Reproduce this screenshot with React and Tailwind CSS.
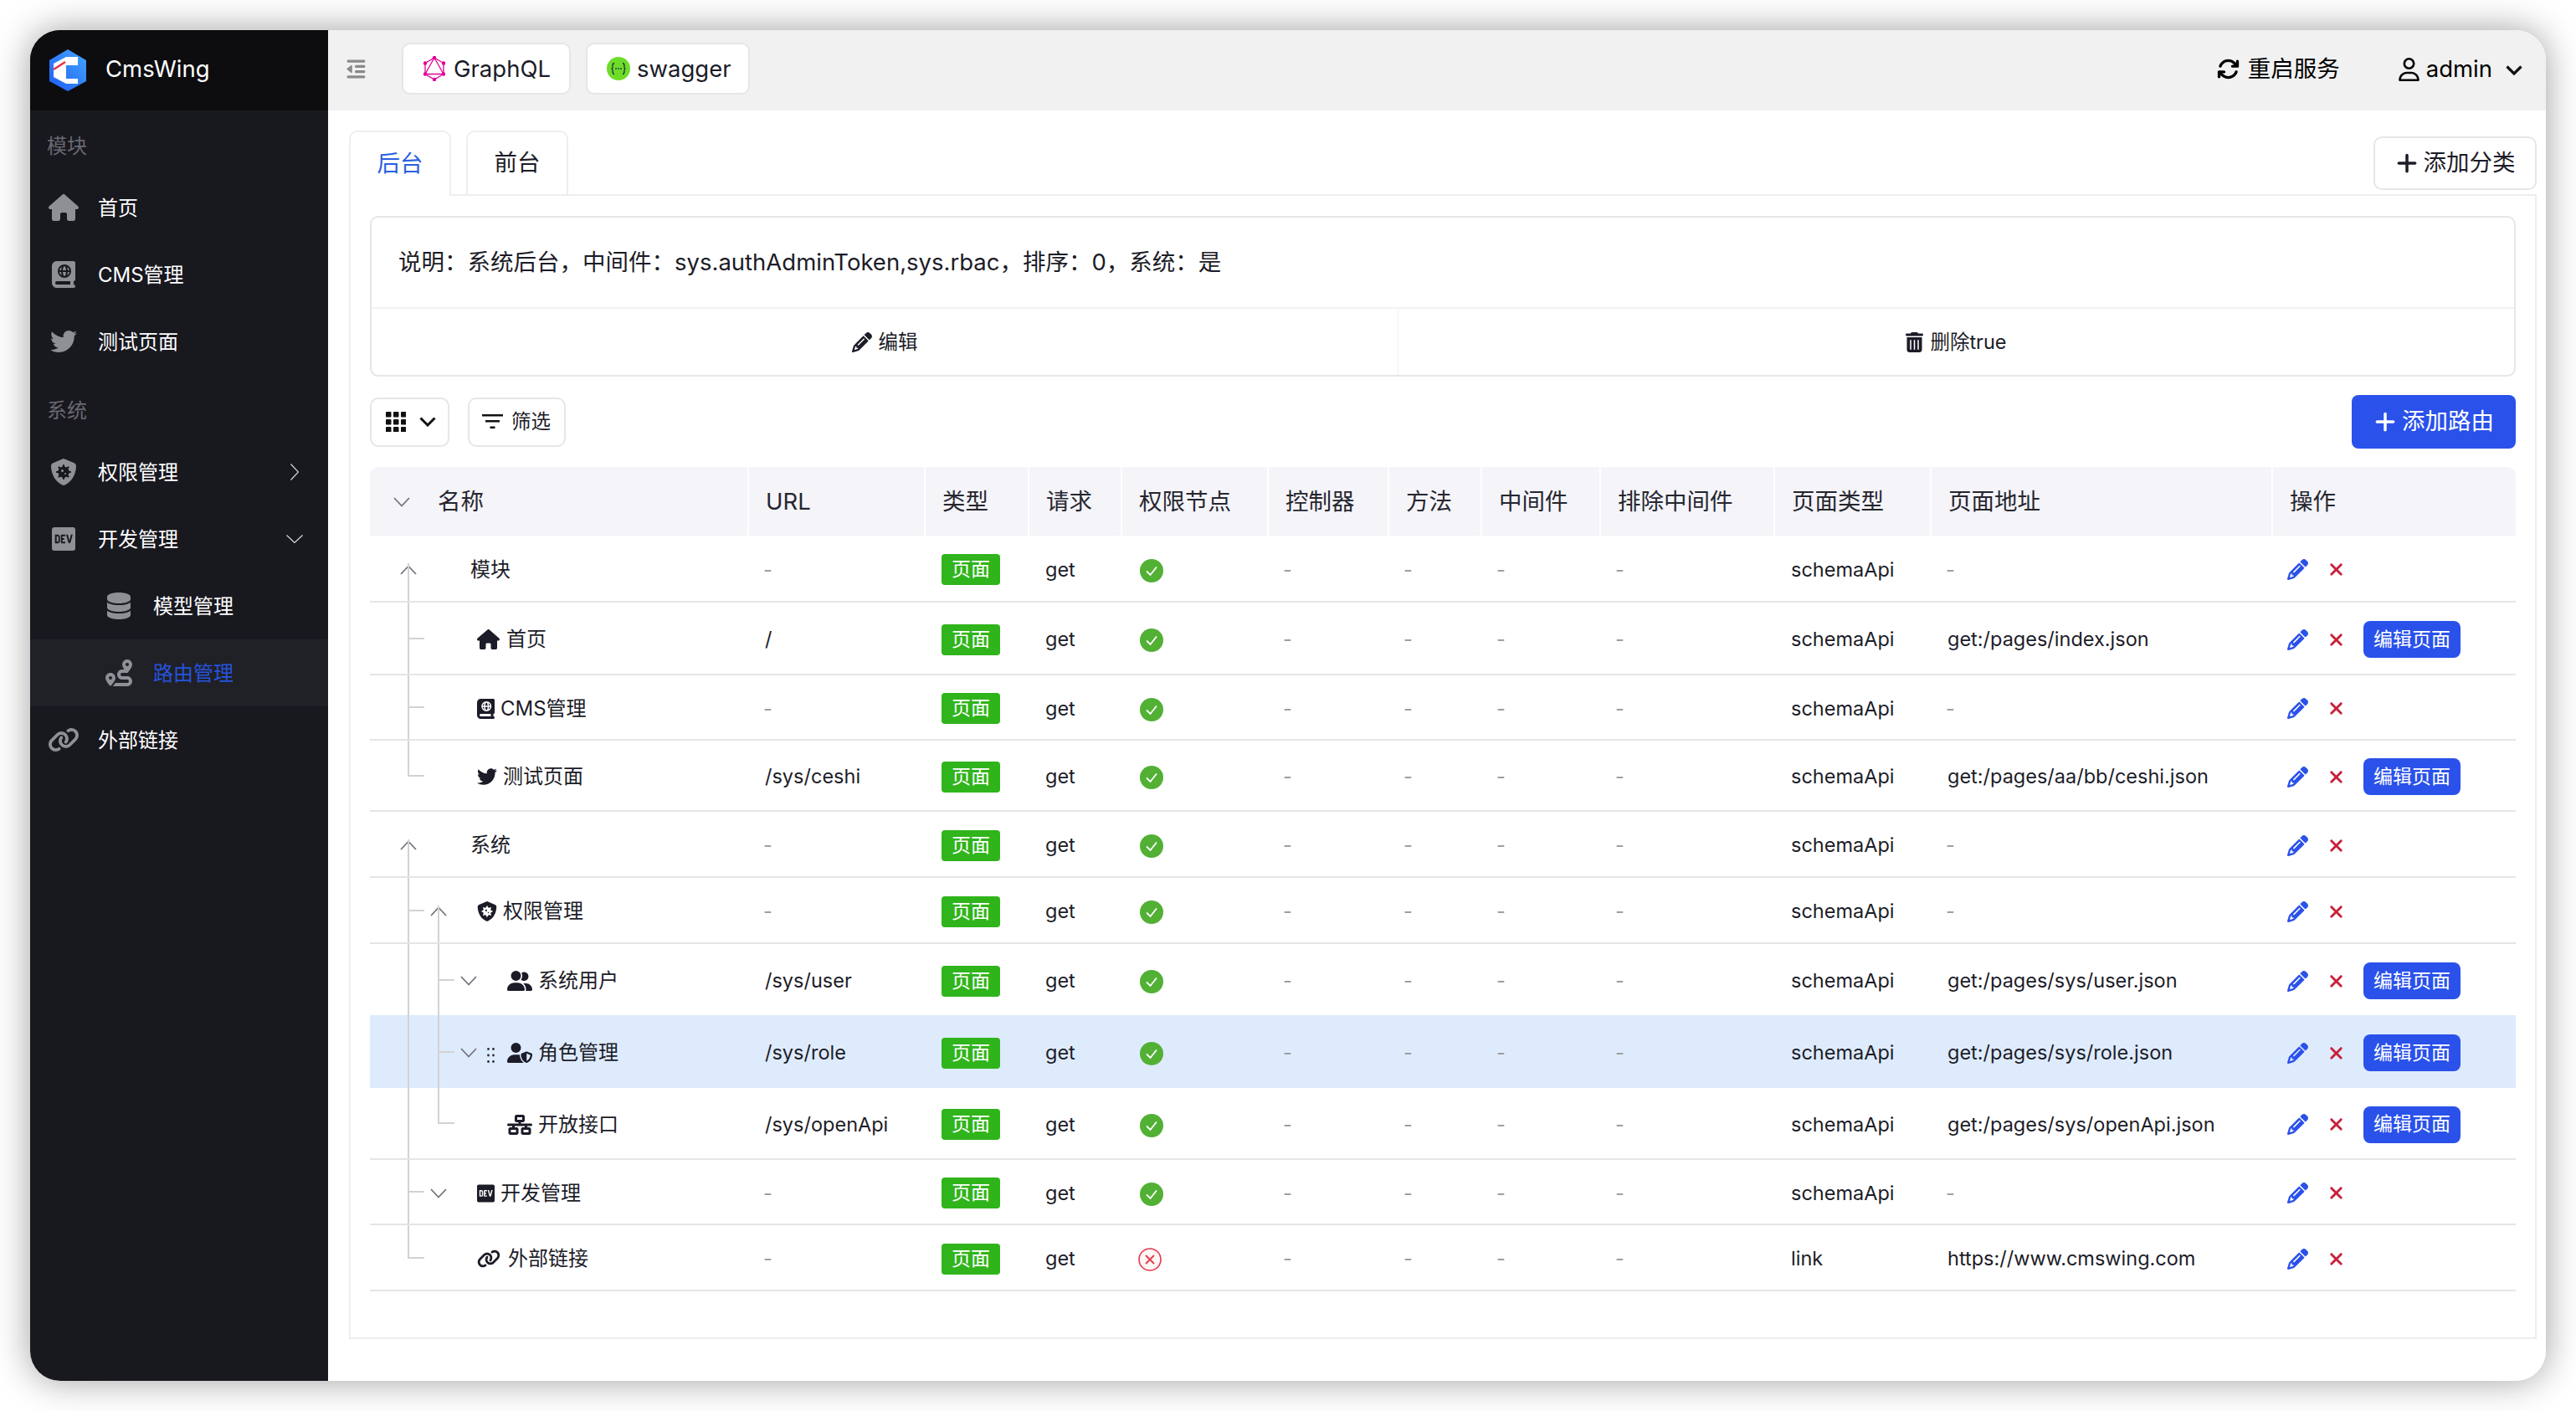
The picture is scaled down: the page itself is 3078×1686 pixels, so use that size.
import React from 'react';
import {
  FaHouse, FaBookAtlas, FaTwitter, FaShieldVirus, FaDev, FaDatabase, FaRoute, FaLink,
  FaUserGroup, FaUserShield, FaNetworkWired, FaPencil, FaXmark, FaTrashCan,
  FaArrowsRotate, FaPlus, FaRegUser, FaOutdent,
} from 'react-icons/fa6';

const INFO = '说明\uFF1A系统后台\uFF0C中间件\uFF1Asys.authAdminToken,sys.rbac\uFF0C排序\uFF1A0\uFF0C系统\uFF1A是';

const Logo = () => (
  <svg viewBox="0 0 44 50" className="w-[44px] h-[50px]">
    <defs>
      <linearGradient id="lg" x1="0" y1="1" x2="1" y2="0">
        <stop offset="0" stopColor="#1d5cf5" />
        <stop offset="1" stopColor="#45a6ff" />
      </linearGradient>
    </defs>
    <polygon points="22,0 44,13 44,38 22,50 0,38 0,13" fill="url(#lg)" />
    <polygon points="5,17 20,9 34,9 34,19 20,19 20,35 34,35 34,41 20,41 5,33" fill="#fff" />
    <line x1="5" y1="24" x2="19" y2="15" stroke="#e8304a" strokeWidth="2.4" />
  </svg>
);

const GraphQLIcon = () => (
  <svg viewBox="0 0 26 30" className="w-[26px] h-[30px]" fill="none" stroke="#e10098" strokeWidth="1.3">
    <polygon points="13,2 24,8.5 24,21.5 13,28 2,21.5 2,8.5" />
    <polygon points="13,2 24,21.5 2,21.5" />
    {[[13, 2], [24, 8.5], [24, 21.5], [13, 28], [2, 21.5], [2, 8.5]].map(([x, y], i) => (
      <circle key={i} cx={x} cy={y} r="2.2" fill="#e10098" stroke="none" />
    ))}
  </svg>
);

const SwaggerIcon = () => (
  <svg viewBox="0 0 28 28" className="w-[28px] h-[28px]">
    <circle cx="14" cy="14" r="14" fill="#6fdc28" />
    <path d="M9 7.500c-2 0-2 1.500-2 3.500v1c0 1-.5 2-1.500 2 1 0 1.500 1 1.500 2v1c0 2 0 3.500 2 3.500" fill="none" stroke="#173647" strokeWidth="1.300" />
    <path d="M19 7.500c2 0 2 1.500 2 3.500v1c0 1 .5 2 1.500 2-1 0-1.500 1-1.500 2v1c0 2 0 3.500-2 3.500" fill="none" stroke="#173647" strokeWidth="1.300" />
    <circle cx="11" cy="14" r="0.9" fill="#173647" />
    <circle cx="14" cy="14" r="0.9" fill="#173647" />
    <circle cx="17" cy="14" r="0.9" fill="#173647" />
  </svg>
);

const GridIcon = () => (
  <svg viewBox="0 0 24 24" className="w-[24px] h-[24px]" fill="#111">
    {[0, 9, 18].flatMap((y) => [0, 9, 18].map((x) => (
      <rect key={`${x}-${y}`} x={x} y={y} width="6.500" height="6.500" rx="1" />
    )))}
  </svg>
);

const Chev = ({ dir }) => (
  <svg viewBox="0 0 20 12" className="w-[20px] h-[12px] shrink-0" fill="none" stroke="#74747c" strokeWidth="1.800">
    <polyline points={dir === 'up' ? '1,11 10,1.500 19,11' : '1,1 10,10.500 19,1'} />
  </svg>
);

const CheckDot = () => (
  <svg viewBox="0 0 28 28" className="w-[28px] h-[28px] relative top-[1px] left-[2px]">
    <circle cx="14" cy="14" r="14" fill="#52b035" />
    <polyline points="8,14.500 12.500,19 20,9.500" fill="none" stroke="#fff" strokeWidth="1.800" />
  </svg>
);

const CrossDot = () => (
  <svg viewBox="0 0 28 28" className="w-[28px] h-[28px] relative top-[1px]">
    <circle cx="14" cy="14" r="13" fill="#fff5f5" stroke="#e5394f" strokeWidth="1.600" />
    <path d="M9 9l10 10M19 9L9 19" stroke="#e5394f" strokeWidth="1.800" />
  </svg>
);

const FilterIcon = () => (
  <svg viewBox="0 0 25 18" className="w-[25px] h-[18px]" fill="#111">
    <rect x="0" y="0" width="25" height="2.500" />
    <rect x="4" y="7" width="17" height="2.500" />
    <rect x="9.500" y="14.500" width="6" height="2.500" />
  </svg>
);

const NavItem = ({ icon, label, sub, active, right }) => (
  <div className={`flex items-center h-[80px] ${sub ? 'pl-[86px]' : 'pl-[20px]'} ${active ? 'bg-[#1f2127]' : ''}`}>
    <span className="w-[40px] flex justify-center text-[#8f8f96]">{icon}</span>
    <span className={`ml-[21px] pt-[1px] text-[24px] ${active ? 'text-[#2653dc]' : 'text-white'}`}>{label}</span>
    {right}
  </div>
);

const GroupLabel = ({ children }) => (
  <div className="h-[76px] pt-[10px] pl-[20px] flex items-center text-[24px] text-[#68686f]">{children}</div>
);

const Sidebar = () => (
  <aside className="w-[356px] shrink-0 bg-[#18181f] flex flex-col">
    <div className="h-[96px] bg-[#0d0d10] flex items-center pl-[23px]">
      <Logo />
      <span className="ml-[23px] pb-[3px] text-[27.500px] text-white">CmsWing</span>
    </div>
    <GroupLabel>模块</GroupLabel>
    <NavItem icon={<FaHouse className="w-[36px] h-[32px]" />} label="首页" />
    <NavItem icon={<FaBookAtlas className="w-[28px] h-[32px]" />} label="CMS管理" />
    <NavItem icon={<FaTwitter className="w-[32px] h-[32px]" />} label="测试页面" />
    <GroupLabel>系统</GroupLabel>
    <NavItem
      icon={<FaShieldVirus className="w-[32px] h-[32px]" />}
      label="权限管理"
      right={
        <svg viewBox="0 0 10 20" className="w-[10px] h-[20px] ml-auto mr-[35px]" fill="none" stroke="#d8d8dc" strokeWidth="1.200">
          <polyline points="0.500,0.500 9.500,10 0.500,19.500" />
        </svg>
      }
    />
    <NavItem
      icon={<FaDev className="w-[28px] h-[32px]" />}
      label="开发管理"
      right={
        <svg viewBox="0 0 20 10" className="w-[20px] h-[10px] ml-auto mr-[30px]" fill="none" stroke="#d8d8dc" strokeWidth="1.200">
          <polyline points="0.500,0.500 10,9.500 19.500,0.500" />
        </svg>
      }
    />
    <NavItem sub icon={<FaDatabase className="w-[28px] h-[32px]" />} label="模型管理" />
    <NavItem sub active icon={<FaRoute className="w-[32px] h-[32px]" />} label="路由管理" />
    <NavItem icon={<FaLink className="w-[38px] h-[32px]" />} label="外部链接" />
  </aside>
);

const TopBtn = ({ icon, label, className }) => (
  <div className={`h-[62px] flex items-center bg-white border-2 border-[#e6e6e6] rounded-[10px] ${className}`}>
    {icon}
    <span className="pt-[1px] text-[27.500px] text-[#1c1c28]">{label}</span>
  </div>
);

const Header = () => (
  <header className="h-[96px] shrink-0 bg-[#f1f1f1] flex items-center pb-[4px] text-black">
    <FaOutdent className="ml-[21px] w-[25px] h-[25px] text-[#8a8a8a]" />
    <TopBtn className="ml-[42px] w-[202px] pl-[24px]" icon={<span className="mr-[10px]"><GraphQLIcon /></span>} label="GraphQL" />
    <TopBtn className="ml-[18px] w-[196px] pl-[23px]" icon={<span className="mr-[8px]"><SwaggerIcon /></span>} label="swagger" />
    <div className="ml-auto pt-[1px] flex items-center">
      <FaArrowsRotate className="w-[27px] h-[27px]" />
      <span className="ml-[10px] text-[27.500px]">重启服务</span>
      <FaRegUser className="ml-[70px] w-[25px] h-[28px]" />
      <span className="ml-[8px] text-[27.500px]">admin</span>
      <svg viewBox="0 0 20 12" className="ml-[16px] mr-[28px] mt-[3px] w-[20px] h-[12px]" fill="none" stroke="#111" strokeWidth="3.200">
        <polyline points="1.500,1.500 10,10 18.500,1.500" />
      </svg>
    </div>
  </header>
);

const cols = [451, 211, 124, 111, 175, 144, 111, 142, 208, 187, 408, 292];
const heads = ['名称', 'URL', '类型', '请求', '权限节点', '控制器', '方法', '中间件', '排除中间件', '页面类型', '页面地址', '操作'];

const rows = [
  { h: 'h-[80px]', label: '模块', level: 0, chev: 'up', v1: 'start' },
  { h: 'h-[87px]', label: '首页', icon: <FaHouse className="w-[27px] h-[24px]" />, gap: 'ml-[8px]', level: 1, v1: 'full', t1: true, url: '/', addr: 'get:/pages/index.json', edit: true },
  { h: 'h-[78px]', label: 'CMS管理', icon: <FaBookAtlas className="w-[21px] h-[24px]" />, gap: 'ml-[7px]', level: 1, v1: 'full', t1: true },
  { h: 'h-[85px]', label: '测试页面', icon: <FaTwitter className="w-[24px] h-[24px]" />, gap: 'ml-[7px]', level: 1, v1: 'end', t1: true, url: '/sys/ceshi', addr: 'get:/pages/aa/bb/ceshi.json', edit: true },
  { h: 'h-[79px]', label: '系统', level: 0, chev: 'up', v1: 'start' },
  { h: 'h-[79px]', label: '权限管理', icon: <FaShieldVirus className="w-[24px] h-[24px]" />, gap: 'ml-[7px]', level: 1, chev: 'up', v1: 'full', t1: true, v2: 'start' },
  { h: 'h-[85px]', label: '系统用户', icon: <FaUserGroup className="w-[30px] h-[24px]" />, gap: 'ml-[7px]', level: 2, chev: 'down', v1: 'full', v2: 'full', t2: true, url: '/sys/user', addr: 'get:/pages/sys/user.json', edit: true, nb: true },
  { h: 'h-[87px]', label: '角色管理', icon: <FaUserShield className="w-[30px] h-[24px]" />, gap: 'ml-[7px]', level: 2, chev: 'down', v1: 'full', v2: 'full', t2: true, url: '/sys/role', addr: 'get:/pages/sys/role.json', edit: true, nb: true, hi: true },
  { h: 'h-[86px]', label: '开放接口', icon: <FaNetworkWired className="w-[30px] h-[24px]" />, gap: 'ml-[7px]', level: 2, v1: 'full', v2: 'end', t2: true, url: '/sys/openApi', addr: 'get:/pages/sys/openApi.json', edit: true },
  { h: 'h-[78px]', label: '开发管理', icon: <FaDev className="w-[21px] h-[24px]" />, gap: 'ml-[7px]', level: 1, chev: 'down', v1: 'full', t1: true },
  { h: 'h-[79px]', label: '外部链接', icon: <FaLink className="w-[28px] h-[24px]" />, gap: 'ml-[9px]', level: 1, v1: 'end', t1: true, type: 'link', addr: 'https://www.cmswing.com', bad: true },
];

const V1 = {
  start: 'top-[33px] bottom-0',
  full: 'top-0 bottom-0',
  end: 'top-0 h-1/2',
};
const LEVEL = ['pl-[36px]', 'pl-[72px]', 'pl-[108px]'];

const Guides = ({ r }) => (
  <>
    {r.v1 && <span className={`absolute left-[45px] w-[2px] bg-[#d2d2d2] ${V1[r.v1]}`} />}
    {r.t1 && <span className="absolute left-[45px] w-[20px] h-[2px] top-[calc(50%-1px)] bg-[#d2d2d2]" />}
    {r.v2 && <span className={`absolute left-[81px] w-[2px] bg-[#d2d2d2] ${V1[r.v2]}`} />}
    {r.t2 && <span className="absolute left-[81px] w-[20px] h-[2px] top-[calc(50%-1px)] bg-[#d2d2d2]" />}
  </>
);

const Dash = () => <span className="relative left-[-2px] text-[#9c9ca2]">-</span>;

const Row = ({ r }) => {
  const line = r.nb ? '' : 'border-b-2 border-[#e5e5e5]';
  const td = `align-middle p-0 pt-[3px] pl-[21px] ${line}`;
  return (
    <tr className={`${r.h} ${r.hi ? 'bg-[#deebfd]' : ''}`}>
      <td className={`relative align-middle p-0 pt-[3px] text-[24px] ${line}`}>
        <Guides r={r} />
        <div className={`flex items-center ${LEVEL[r.level]}`}>
          <span className="w-[20px] shrink-0 flex justify-center">{r.chev && <Chev dir={r.chev} />}</span>
          {r.level === 0 ? (
            <span className="ml-[64px]">{r.label}</span>
          ) : (
            <div className="ml-[36px] flex items-center text-[#1c1c28]">
              {r.icon}
              <span className={r.gap}>{r.label}</span>
            </div>
          )}
        </div>
        {r.hi && (
          <svg viewBox="0 0 9 18" className="absolute left-[140px] top-[39px] w-[9px] h-[18px]" fill="#2a2a35">
            {[1.500, 9, 16.500].map((y) => (
              <g key={y}>
                <circle cx="1.500" cy={y} r="1.400" />
                <circle cx="7.500" cy={y} r="1.400" />
              </g>
            ))}
          </svg>
        )}
      </td>
      <td className={td}>{r.url || <Dash />}</td>
      <td className={td}>
        <span className="inline-flex items-center justify-center w-[70px] h-[37px] rounded-[4px] bg-[#30b41c] text-white text-[23px]">页面</span>
      </td>
      <td className={td}>get</td>
      <td className={td}>{r.bad ? <CrossDot /> : <CheckDot />}</td>
      <td className={td}><Dash /></td>
      <td className={td}><Dash /></td>
      <td className={td}><Dash /></td>
      <td className={td}><Dash /></td>
      <td className={td}>{r.type || 'schemaApi'}</td>
      <td className={td}>{r.addr || <Dash />}</td>
      <td className={td}>
        <div className="flex items-center">
          <FaPencil className="ml-[-2px] w-[25px] h-[25px] text-[#2a51ea]" />
          <FaXmark className="ml-[22px] w-[23px] h-[23px] text-[#c8203c]" />
          {r.edit && (
            <span className="ml-[21px] w-[116px] h-[44px] rounded-[8px] bg-[#2a51ea] text-white text-[23px] flex items-center justify-center">编辑页面</span>
          )}
        </div>
      </td>
    </tr>
  );
};

const RouteTable = () => (
  <table className="mt-[22px] w-[2564px] table-fixed border-separate border-spacing-0 text-[23.500px] text-[#1c1c28]">
    <colgroup>
      {cols.map((w, i) => <col key={i} span="1" width={w} />)}
    </colgroup>
    <thead>
      <tr className="h-[82px] bg-[#f4f4f9]">
        {heads.map((h, i) => (
          <th
            key={h}
            className={`p-0 pt-[2px] text-left font-normal text-[27.500px] text-[#26262f] ${i === 0 ? 'rounded-tl-[10px]' : 'border-l-2 border-white pl-[20px]'} ${i === heads.length - 1 ? 'rounded-tr-[10px]' : ''}`}
          >
            {i === 0 ? (
              <div className="flex items-center pl-[28px]">
                <Chev dir="down" />
                <span className="ml-[33px]">{h}</span>
              </div>
            ) : h}
          </th>
        ))}
      </tr>
    </thead>
    <tbody>
      {rows.map((r) => <Row key={r.label} r={r} />)}
    </tbody>
  </table>
);

const Content = () => (
  <main className="flex-1 min-h-0 flex flex-col pt-[24px] pl-[25px] pr-[11px] pb-[50px] bg-white">
    <div className="h-[78px] shrink-0 flex items-center border-b-2 border-[#eeeeee] relative">
      <div className="relative top-[1px] h-[78px] w-[122px] flex items-center justify-center border-2 border-b-0 border-[#eeeeee] rounded-t-[10px] bg-white text-[27.500px] text-[#2a5fe0]">后台</div>
      <div className="ml-[18px] h-[76px] self-start w-[122px] flex items-center justify-center border-2 border-b-0 border-[#eeeeee] rounded-t-[10px] text-[27.500px] text-[#1c1c28]">前台</div>
      <div className="ml-auto self-start mt-[7px] w-[195px] h-[64px] flex items-center justify-center border-2 border-[#e6e6e6] rounded-[10px] text-[27.500px] text-[#1c1c28] bg-white">
        <FaPlus className="w-[28px] h-[28px] mr-[6px]" />
        添加分类
      </div>
    </div>
    <div className="flex-1 min-h-0 border-2 border-t-0 border-[#eeeeee] pl-[23px] pr-[23px] pt-[24px]">
      <section className="h-[192px] border-2 border-[#e6e6e6] rounded-[10px] flex flex-col">
        <div className="h-[107px] shrink-0 flex items-center pl-[32px] text-[27.500px] text-[#1c1c28]">{INFO}</div>
        <div className="flex-1 flex border-t-2 border-[#f2f2f7] text-[23.500px] text-[#1c1c28]">
          <div className="w-[1227px] flex items-center justify-center border-r border-[#f0f0f4]">
            <FaPencil className="w-[24px] h-[24px] mr-[8px]" />
            编辑
          </div>
          <div className="flex-1 flex items-center justify-center">
            <FaTrashCan className="w-[21px] h-[24px] mr-[8px]" />
            删除true
          </div>
        </div>
      </section>
      <div className="mt-[22px] h-[64px] flex items-center text-[#1c1c28]">
        <div className="w-[95px] h-[59px] flex items-center pl-[17px] border-2 border-[#e6e6e6] rounded-[10px]">
          <GridIcon />
          <svg viewBox="0 0 20 12" className="ml-[16px] w-[20px] h-[12px]" fill="none" stroke="#111" strokeWidth="3">
            <polyline points="1.500,1.500 10,10 18.500,1.500" />
          </svg>
        </div>
        <div className="ml-[22px] w-[117px] h-[59px] flex items-center pl-[15px] border-2 border-[#e6e6e6] rounded-[10px] text-[23.500px]">
          <FilterIcon />
          <span className="ml-[10px]">筛选</span>
        </div>
        <div className="ml-auto w-[196px] h-[64px] rounded-[8px] bg-[#2a51ea] text-white text-[27.500px] flex items-center justify-center">
          <FaPlus className="w-[28px] h-[28px] mr-[6px]" />
          添加路由
        </div>
      </div>
      <RouteTable />
    </div>
  </main>
);

export default function App() {
  return (
    <div lang="zh-CN" className="w-[3078px] h-[1686px] bg-white p-[36px] [font-family:Inter,Noto_Sans_CJK_SC,sans-serif]">
      <div className="w-[3006px] h-[1614px] flex rounded-[36px] overflow-hidden shadow-[0_0_44px_rgba(0,0,0,0.38)]">
        <Sidebar />
        <div className="flex-1 min-w-0 flex flex-col">
          <Header />
          <Content />
        </div>
      </div>
    </div>
  );
}
